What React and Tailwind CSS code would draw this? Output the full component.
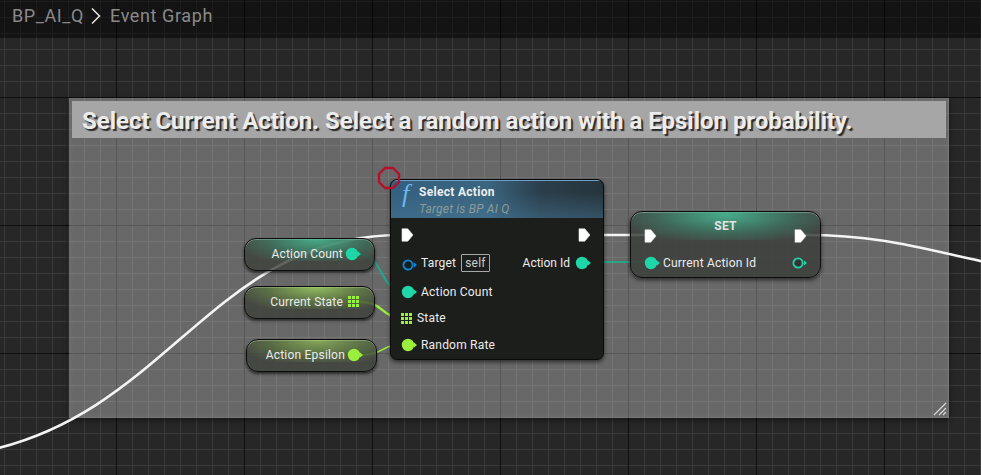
import React from 'react';

const teal = '#1ed6a8';
const lime = '#9af03c';

function Pin({ color, hollow = false, inner = '#1a1c1a' }) {
   return (
      <svg width="16" height="14" viewBox="0 0 16 14" className="shrink-0">
         <path d="M13 4.5 L16 7 L13 9.5 Z" fill={color} />
         {hollow ? (
            <circle cx="7" cy="7" r="4.6" fill={inner} stroke={color} strokeWidth="1.8" />
         ) : (
            <circle cx="7" cy="7" r="6.2" fill={color} />
         )}
      </svg>
   );
}

function ExecPin() {
   return (
      <svg width="13" height="14" viewBox="0 0 13 14" className="shrink-0">
         <path d="M1 0.8 H6.8 L12 7 L6.8 13.2 H1 Z" fill="#fff" stroke="#e8e8e8" strokeWidth="0.6" />
      </svg>
   );
}

function GridPin() {
   const cells = [];
   for (let y = 0; y < 3; y++) {
      for (let x = 0; x < 3; x++) {
         cells.push(<rect key={`${x}-${y}`} x={x * 4} y={y * 4} width="3" height="3" fill={lime} />);
      }
   }
   return (
      <svg width="11" height="11" viewBox="0 0 11 11" className="shrink-0">
         {cells}
      </svg>
   );
}

function VarNode({ className, tint, label, children }) {
   return (
      <div
         className={`absolute w-[131px] h-[33px] rounded-[12px] border border-[#0c0c0c] bg-[#3c3e3a]/80 shadow-[0_2px_3px_rgba(0,0,0,0.6),inset_0_1px_0_rgba(255,255,255,0.4)] overflow-hidden ${className}`}
      >
         <div className={`absolute inset-x-0 top-0 h-[22px] ${tint}`} />
         <div className="relative h-full flex items-center justify-end gap-[2px] pr-[13px] pb-[2px] text-[12px] tracking-[0.2px] text-[#ececec]">
            <span>{label}</span>
            {children}
         </div>
      </div>
   );
}

function Wires() {
   return (
      <svg width="981" height="475" viewBox="0 0 981 475" fill="none" className="absolute inset-0">
         <path d="M-10 450 C 170 410 215 236 400 235" stroke="#f4f4f4" strokeWidth="2.6" />
         <path d="M592 235 H648" stroke="#f4f4f4" strokeWidth="2.6" />
         <path d="M805 235 C 880 235 920 248 985 262" stroke="#f4f4f4" strokeWidth="2.6" />
         <path d="M358 254 C 385 254 378 292 406 292" stroke="#14b08c" strokeWidth="1.8" />
         <path d="M360 302 C 385 302 380 318 404 318" stroke={lime} strokeWidth="2.4" />
         <path d="M360 355 C 385 355 380 344 406 344" stroke={lime} strokeWidth="1.5" />
         <path d="M590 262 H650" stroke="#14b890" strokeWidth="1.4" />
      </svg>
   );
}

function SelectAction() {
   return (
      <div className="absolute left-[390px] top-[179px] w-[214px] h-[181px] rounded-[7px] border border-[#0a0a0a] bg-[#1c1e1c] shadow-[0_2px_4px_rgba(0,0,0,0.6)] overflow-hidden text-[12px] tracking-[0.2px] text-[#ececec]">
         <div className="relative h-[38px] bg-[linear-gradient(90deg,#34607f_0%,#3a6580_45%,#2b3f4c_70%,#26343c_100%)] border-t border-[#6ea0c4]">
            <div className="absolute inset-0 bg-[linear-gradient(180deg,rgba(0,0,0,0)_30%,rgba(70,120,150,0.45)_100%)]" />
            <span className="absolute left-[11px] top-[-1px] text-[26px] leading-[28px] italic text-[#6db8f0] font-['Liberation_Serif',serif]">f</span>
            <span className="absolute left-[28px] top-[2px] font-bold tracking-[0.3px] text-[#eee]">Select Action</span>
            <span className="absolute left-[28px] top-[19px] text-[12px] italic text-[#8d9a96]">Target is BP AI Q</span>
         </div>
         <div className="flex justify-between pl-[10px] pr-[12px] pt-[9px]">
            <div className="flex flex-col">
               <div className="h-[16px] flex items-center"><ExecPin /></div>
               <div className="h-[30px] mt-[5px] flex items-center gap-[4px]">
                  <div className="mt-[3px]"><Pin color="#0a87d8" hollow /></div>
                  <span>Target</span>
                  <span className="ml-[1px] h-[18px] px-[3px] border border-[#a8a8a8] rounded-[1px] text-[#ccc] leading-[16px]">self</span>
               </div>
               <div className="h-[26px] mt-[1px] flex items-center gap-[4px]">
                  <Pin color={teal} />
                  <span>Action Count</span>
               </div>
               <div className="h-[26px] flex items-center gap-[5px]">
                  <GridPin />
                  <span>State</span>
               </div>
               <div className="h-[26px] mt-[1px] flex items-center gap-[4px]">
                  <Pin color={lime} />
                  <span>Random Rate</span>
               </div>
            </div>
            <div className="flex flex-col items-end">
               <div className="h-[16px] flex items-center"><ExecPin /></div>
               <div className="h-[30px] mt-[5px] flex items-center gap-[5px] tracking-[0px]">
                  <span>Action Id</span>
                  <Pin color={teal} />
               </div>
            </div>
         </div>
      </div>
   );
}

function SetNode() {
   return (
      <div className="absolute left-[630px] top-[211px] w-[191px] h-[67px] rounded-[12px] border border-[#0c0c0c] bg-[#3c3e3c]/85 shadow-[0_2px_4px_rgba(0,0,0,0.6),inset_0_1px_0_rgba(255,255,255,0.4)] overflow-hidden text-[12px] tracking-[0.2px] text-[#ececec]">
         <div className="absolute inset-x-0 top-0 h-[28px] bg-[radial-gradient(ellipse_at_50%_10%,rgba(70,190,150,0.85)_0%,rgba(60,150,120,0.45)_50%,rgba(60,90,80,0)_85%)]" />
         <div className="relative h-full flex flex-col px-[13px]">
            <div className="h-[28px] text-center font-bold leading-[28px] text-[#e4e4e4]">SET</div>
            <div className="flex justify-between items-center -mt-[11px] h-[14px]">
               <ExecPin />
               <ExecPin />
            </div>
            <div className="flex justify-between items-center mt-[13px] h-[14px]">
               <div className="flex items-center gap-[3px]">
                  <Pin color={teal} />
                  <span>Current Action Id</span>
               </div>
               <Pin color={teal} hollow inner="#333" />
            </div>
         </div>
      </div>
   );
}

export default function App() {
   return (
      <div className="relative w-[981px] h-[475px] overflow-hidden bg-[#272727] font-['Roboto',sans-serif] bg-[linear-gradient(90deg,#0e0e0e_1px,transparent_1px),linear-gradient(180deg,#0e0e0e_1px,transparent_1px),linear-gradient(90deg,#3a3a3a_1px,transparent_1px),linear-gradient(180deg,#3a3a3a_1px,transparent_1px)] bg-[size:128px_128px,128px_128px,16px_16px,16px_16px] bg-[position:116px_97px,116px_97px,4px_1px,4px_1px]">
         {/* comment box */}
         <div className="absolute left-[69px] top-[98px] w-[880px] h-[320px] bg-white/30 shadow-[0_2px_5px_rgba(0,0,0,0.5),inset_0_0_10px_rgba(255,255,255,0.06)] p-[3px]">
            <div className="h-[37px] bg-[#a6a6a6] pl-[10px] text-[24px] tracking-[-0.03px] font-bold leading-[41px] text-[#ececec] [text-shadow:2px_2px_1px_rgba(0,0,0,0.75)] whitespace-nowrap">
               Select Current Action. Select a random action with a Epsilon probability.
            </div>
            <svg width="14" height="14" viewBox="0 0 14 14" className="absolute right-[2px] bottom-[2px]" stroke="#d8d8d8" strokeWidth="1.2">
               <path d="M1 13 L13 1 M6 13 L13 6 M10 13 L13 10" />
            </svg>
         </div>

         <Wires />

         <VarNode
            className="left-[244px] top-[238px]"
            tint="bg-[radial-gradient(ellipse_at_55%_0%,rgba(70,190,150,0.85)_0%,rgba(60,140,110,0.5)_50%,rgba(60,90,80,0)_85%)]"
            label="Action Count"
         >
            <Pin color={teal} />
         </VarNode>
         <VarNode
            className="left-[244px] top-[286px]"
            tint="bg-[radial-gradient(ellipse_at_55%_0%,rgba(160,210,100,0.85)_0%,rgba(110,150,70,0.5)_50%,rgba(80,90,60,0)_85%)]"
            label="Current State"
         >
            <div className="mr-[2px] ml-[3px]"><GridPin /></div>
         </VarNode>
         <VarNode
            className="left-[246px] top-[339px]"
            tint="bg-[radial-gradient(ellipse_at_55%_0%,rgba(160,210,100,0.7)_0%,rgba(110,150,70,0.45)_50%,rgba(80,90,60,0)_85%)]"
            label="Action Epsilon"
         >
            <Pin color={lime} />
         </VarNode>

         <SelectAction />
         <SetNode />

         {/* red marker on the node corner */}
         <svg width="24" height="24" viewBox="0 0 24 24" fill="none" className="absolute left-[377px] top-[166px]">
            <path d="M8 2 H16 L22 8 V16 L16 22 H8 L2 16 V8 Z" stroke="#b5102c" strokeWidth="2.4" />
         </svg>

         {/* breadcrumb */}
         <div className="absolute inset-x-0 top-0 h-[38px] bg-black/50 flex items-center pl-[12px] pb-[7px] text-[18px] text-[#8a8a8a] tracking-[0.6px]">
            <span>BP_AI_Q</span>
            <svg width="14" height="20" viewBox="0 0 14 20" fill="none" className="ml-[5px] mr-[7px]">
               <path d="M3 2.5 L10.5 10 L3 17.5" stroke="#e8e8e8" strokeWidth="1.5" />
            </svg>
            <span>Event Graph</span>
         </div>
      </div>
   );
}
